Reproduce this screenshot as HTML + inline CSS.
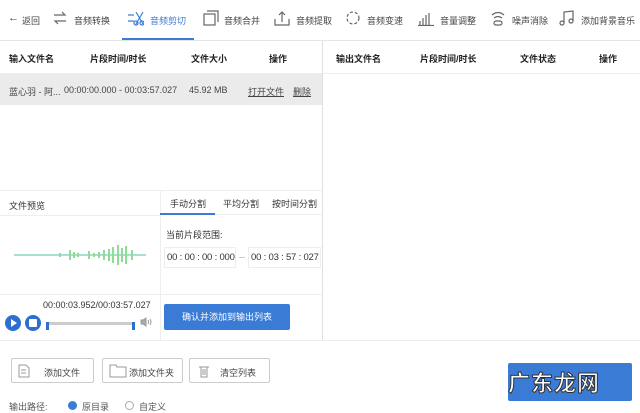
<!DOCTYPE html>
<html><head><meta charset="utf-8"><style>
*{margin:0;padding:0;box-sizing:border-box}
body{width:640px;height:410px;background:#fff;font-family:"Liberation Sans","Noto Sans CJK SC",sans-serif;font-size:9px;color:#333;position:relative;overflow:hidden}
.a{position:absolute;white-space:nowrap}
.tb span{position:absolute;top:14px;font-size:9px;color:#444;white-space:nowrap}
.ic{position:absolute;top:10px;width:16px;height:16px}
.hd{position:absolute;top:52px;font-size:9px;font-weight:bold;color:#222}
.btn{position:absolute;top:358px;height:25px;border:1px solid #ccc;border-radius:2px;background:#fff;font-size:9px;color:#444}
.btn span{position:absolute;top:7px;white-space:nowrap}
</style></head><body>
<div class="tb">
<span style="left:8px;font-size:11px;top:12px">←</span><span style="left:22px">返回</span>
<svg class="ic" style="left:52px" viewBox="0 0 16 16" fill="none" stroke="#666" stroke-width="1.2"><path d="M2 5h11l-3-3M14 11H3l3 3"/></svg><span style="left:74px">音频转换</span>
<svg class="ic" style="left:128px" viewBox="0 0 16 16" fill="none" stroke="#3a7bd5" stroke-width="1.2"><path d="M0 5h6M0 11h6M8 2l7 12M15 2L8 14"/><circle cx="8" cy="13" r="2"/><circle cx="14" cy="13" r="2"/></svg><span style="left:150px;color:#3a7bd5">音频剪切</span>
<div class="a" style="left:122px;top:38px;width:72px;height:2px;background:#3a7bd5"></div>
<svg class="ic" style="left:203px" viewBox="0 0 16 16" fill="none" stroke="#666" stroke-width="1.2"><rect x="1" y="4" width="11" height="11"/><path d="M4 1h11v11"/></svg><span style="left:224px">音频合并</span>
<svg class="ic" style="left:274px" viewBox="0 0 16 16" fill="none" stroke="#666" stroke-width="1.2"><path d="M1 9v6h14V9M8 12V2M5 5l3-3 3 3"/></svg><span style="left:296px">音频提取</span>
<svg class="ic" style="left:345px" viewBox="0 0 16 16" fill="none" stroke="#666" stroke-width="1.2" stroke-dasharray="3 2"><circle cx="8" cy="8" r="6"/></svg><span style="left:367px">音频变速</span>
<svg class="ic" style="left:418px" viewBox="0 0 16 16" fill="none" stroke="#666" stroke-width="1.2"><path d="M2 15V11M5 15V8M8 15V5M11 15V3M0 15.5h16"/></svg><span style="left:440px">音量调整</span>
<svg class="ic" style="left:490px" viewBox="0 0 16 16" fill="none" stroke="#666" stroke-width="1.2"><path d="M2 5q6-5 12 0M4 8q4-3 8 0"/><rect x="4" y="11" width="8" height="4" rx="2"/></svg><span style="left:512px">噪声消除</span>
<svg class="ic" style="left:559px" viewBox="0 0 16 16" fill="none" stroke="#666" stroke-width="1.2"><path d="M5 13V2l9-1v10"/><circle cx="3" cy="13" r="2"/><circle cx="12" cy="11" r="2"/></svg><span style="left:581px">添加背景音乐</span>
</div>
<div class="a" style="left:0;top:40px;width:640px;height:1px;background:#e6e6e6"></div>
<div class="hd" style="left:9px">输入文件名</div><div class="hd" style="left:90px">片段时间/时长</div><div class="hd" style="left:191px">文件大小</div><div class="hd" style="left:269px">操作</div>
<div class="hd" style="left:336px">输出文件名</div><div class="hd" style="left:420px">片段时间/时长</div><div class="hd" style="left:520px">文件状态</div><div class="hd" style="left:599px">操作</div>
<div class="a" style="left:0;top:73px;width:640px;height:1px;background:#eee"></div>
<div class="a" style="left:322px;top:41px;width:1px;height:300px;background:#e0e0e0"></div>
<div class="a" style="left:0;top:74px;width:322px;height:31px;background:#ebebeb"></div>
<div class="a" style="left:9px;top:85px;color:#444">蓝心羽 - 阿...</div>
<div class="a" style="left:64px;top:85px;color:#444">00:00:00.000 - 00:03:57.027</div>
<div class="a" style="left:189px;top:85px;color:#444">45.92 MB</div>
<div class="a" style="left:248px;top:85px;color:#444;text-decoration:underline">打开文件</div>
<div class="a" style="left:293px;top:85px;color:#444;text-decoration:underline">删除</div>
<div class="a" style="left:0;top:190px;width:322px;height:1px;background:#eee"></div>
<div class="a" style="left:0;top:215px;width:160px;height:1px;background:#eee"></div>
<div class="a" style="left:160px;top:191px;width:1px;height:150px;background:#eee"></div>
<div class="a" style="left:9px;top:199px">文件预览</div>
<div class="a" style="left:170px;top:197px">手动分割</div>
<div class="a" style="left:223px;top:197px">平均分割</div>
<div class="a" style="left:272px;top:197px">按时间分割</div>
<div class="a" style="left:160px;top:213px;width:55px;height:2px;background:#3a7bd5"></div>
<div class="a" style="left:215px;top:214px;width:107px;height:1px;background:#eee"></div>
<svg class="a" style="left:14px;top:240px" width="132" height="30" viewBox="0 0 132 30">
<path d="M0 15H132" stroke="#8ad6c0" stroke-width="1.5"/>
<g stroke="#8edc96" stroke-width="2">
<path d="M56 10v10M60 12v6M75 11v8M85 12v6M90 10v10M95 9v12M99 7v16M104 5v20M108 8v14M112 6v18M118 10v10M46 13v4M64 13v4M80 13v4"/></g></svg>
<div class="a" style="left:166px;top:228px">当前片段范围:</div>
<div class="a" style="left:164px;top:247px;width:72px;height:21px;border:1px solid #eee;font-size:9.5px;padding:4px 2px;letter-spacing:-0.2px">00 : 00 : 00 : 000</div>
<div class="a" style="left:239px;top:257px;width:6px;height:1px;background:#ccc"></div>
<div class="a" style="left:248px;top:247px;width:73px;height:21px;border:1px solid #eee;font-size:9.5px;padding:4px 2px;letter-spacing:-0.2px">00 : 03 : 57 : 027</div>
<div class="a" style="left:0;top:294px;width:322px;height:1px;background:#eee"></div>
<div class="a" style="left:43px;top:300px;font-size:9px">00:00:03.952/00:03:57.027</div>
<div class="a" style="left:5px;top:315px;width:16px;height:16px;border-radius:50%;background:#2d6fd1"></div>
<div class="a" style="left:11px;top:319px;width:0;height:0;border-left:6px solid #fff;border-top:4px solid transparent;border-bottom:4px solid transparent"></div>
<div class="a" style="left:25px;top:315px;width:16px;height:16px;border-radius:50%;background:#2d6fd1"></div>
<div class="a" style="left:29px;top:319px;width:8px;height:8px;background:#fff;border-radius:1px"></div>
<div class="a" style="left:47px;top:322px;width:86px;height:3px;background:#ccc;border-radius:2px"></div>
<div class="a" style="left:46px;top:322px;width:3px;height:8px;background:#2d6fd1"></div>
<div class="a" style="left:132px;top:322px;width:3px;height:8px;background:#2d6fd1"></div>
<svg class="a" style="left:140px;top:317px" width="12" height="10" fill="none" stroke="#999"><path d="M1 3h2l3-2v8L3 7H1z" fill="#aaa"/><path d="M8 3q1 2 0 4M10 2q2 3 0 6"/></svg>
<div class="a" style="left:164px;top:304px;width:126px;height:26px;background:#3a7bd5;border-radius:2px;color:#fff;text-align:center;line-height:26px">确认并添加到输出列表</div>
<div class="a" style="left:0;top:340px;width:640px;height:1px;background:#eee"></div>
<div class="btn" style="left:11px;width:83px"><svg class="a" style="left:6px;top:5px" width="12" height="14" fill="none" stroke="#999"><path d="M1 1h7l3 3v9H1zM3 6h5M3 9h5"/></svg><span style="left:32px">添加文件</span></div>
<div class="btn" style="left:102px;width:81px"><svg class="a" style="left:6px;top:5px" width="18" height="14" fill="none" stroke="#999"><path d="M1 1h6l1 2h9v10H1z"/></svg><span style="left:26px">添加文件夹</span></div>
<div class="btn" style="left:189px;width:81px"><svg class="a" style="left:8px;top:5px" width="12" height="14" fill="none" stroke="#999"><path d="M1 3h10M3 3v10h6V3M5 5v6M7 5v6"/></svg><span style="left:30px">清空列表</span></div>
<div class="a" style="left:508px;top:363px;width:124px;height:38px;background:#3a7bd5;border-radius:2px"></div>
<div class="a" style="left:508px;top:366px;font-size:22px;color:#fff;font-weight:bold;-webkit-text-stroke:1px #333;letter-spacing:1px">广东龙网</div>
<div class="a" style="left:9px;top:400px;color:#555">输出路径:</div>
<div class="a" style="left:68px;top:401px;width:9px;height:9px;border-radius:50%;background:#3a7bd5"></div>
<div class="a" style="left:82px;top:400px;color:#555">原目录</div>
<div class="a" style="left:125px;top:401px;width:9px;height:9px;border-radius:50%;border:1px solid #aaa"></div>
<div class="a" style="left:139px;top:400px;color:#555">自定义</div>
</body></html>
